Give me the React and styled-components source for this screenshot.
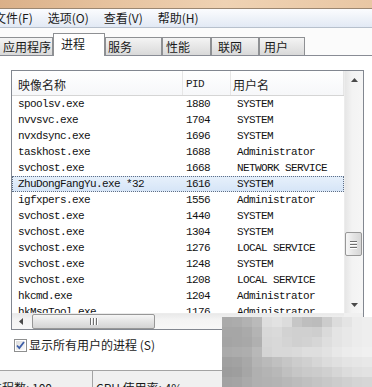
import styled, { createGlobalStyle } from "styled-components";

const CJK = `"Noto Sans CJK SC", "Noto Sans", sans-serif`;
const MONO = `"Liberation Mono", "DejaVu Sans Mono", "Courier New", monospace`;

const GlobalStyle = createGlobalStyle`
  html, body {
    margin: 0;
    padding: 0;
    background: #fff;
    overflow: hidden;
  }
  body {
    width: 372px;
    height: 387px;
  }
`;

const Window = styled.div`
  position: relative;
  width: 392px;
  height: 387px;
  margin-left: -10px;
  display: flex;
  flex-direction: column;
  background: #fbfbfb;
  font-family: ${CJK};
  color: #1a1a1a;
  overflow: hidden;
`;

const TitleStrip = styled.div`
  height: 8px;
  flex-shrink: 0;
  background: linear-gradient(90deg, #d9ae86 0%, #e6c29e 30%, #efd2b3 60%, #e8c6a3 100%);
  border-bottom: 1px solid #9b8772;
`;

const MenuBar = styled.div`
  height: 18px;
  flex-shrink: 0;
  display: flex;
  align-items: center;
  gap: 15px;
  padding-left: 4px;
  font-size: 12px;
  line-height: 18px;
  background: linear-gradient(#fbfcfe, #e2e9f4);
  border-bottom: 1px solid #b7c0cc;
`;

const MenuItem = styled.span`
  white-space: nowrap;
`;

const TabRow = styled.div`
  height: 27px;
  flex-shrink: 0;
  display: flex;
  align-items: flex-end;
  padding-left: 4px;
`;

const Tab = styled.div`
  position: relative;
  box-sizing: border-box;
  width: ${(p) => p.$w}px;
  height: ${(p) => (p.$active ? 23 : 18)}px;
  margin-bottom: ${(p) => (p.$active ? -1 : 0)}px;
  z-index: ${(p) => (p.$active ? 2 : 1)};
  padding-left: ${(p) => p.$pl}px;
  padding-top: ${(p) => (p.$active ? 1 : 0)}px;
  border: 1px solid #8e9093;
  border-bottom: none;
  background: ${(p) => (p.$active ? "#fff" : "linear-gradient(#f4f4f4, #d9d9d9)")};
  font-size: 12px;
  line-height: 17px;
  white-space: nowrap;
`;

const Panel = styled.div`
  box-sizing: border-box;
  height: 315px;
  flex-shrink: 0;
  margin: 0 4px;
  padding: 14px 0 0 16px;
  background: #fff;
  border-top: 1px solid #898c95;
  border-left: 1px solid #898c95;
`;

const ListBox = styled.div`
  box-sizing: border-box;
  width: 353px;
  height: 260px;
  border: 1px solid #828790;
  display: grid;
  grid-template-columns: 1fr 19px;
  grid-template-rows: 1fr 16px;
  background: #fff;
`;

const ListArea = styled.div`
  overflow: hidden;
`;

const Header = styled.div`
  box-sizing: border-box;
  height: 25px;
  display: grid;
  grid-template-columns: 171px 48px 1fr;
  border-bottom: 1px solid #d5d5d5;
  background: linear-gradient(#ffffff, #f6f7f9);
`;

const HeadCell = styled.div`
  display: flex;
  align-items: center;
  padding-top: 2px;
  padding-left: ${(p) => p.$pl}px;
  border-right: 1px solid #e6e6e6;
  font-family: ${(p) => (p.$mono ? MONO : CJK)};
  font-size: ${(p) => (p.$mono ? 11 : 12)}px;
  letter-spacing: ${(p) => (p.$mono ? -0.6 : 0)}px;
  color: #1e1e1e;
`;

const Row = styled.div`
  box-sizing: border-box;
  height: 16px;
  display: grid;
  grid-template-columns: 171px 48px 1fr;
  align-items: center;
  font-family: ${MONO};
  font-size: 11px;
  line-height: 14px;
  letter-spacing: -0.6px;
  color: #111;
  background: ${(p) => (p.$selected ? "linear-gradient(#e6f0fb, #d6e5f7)" : "transparent")};
  border: 1px dotted ${(p) => (p.$selected ? "#5f6f86" : "transparent")};
`;

const Cell = styled.span`
  padding-left: ${(p) => p.$pl}px;
  white-space: nowrap;
  overflow: hidden;
`;

const VScroll = styled.div`
  display: flex;
  flex-direction: column;
  background: linear-gradient(90deg, #e6e6e6, #f3f3f3 40%, #f6f6f6);
  border-left: 1px solid #ececec;
`;

const ArrowButton = styled.div`
  flex-shrink: 0;
  width: ${(p) => (p.$horizontal ? 17 : 18)}px;
  height: ${(p) => (p.$horizontal ? 16 : 17)}px;
  display: flex;
  align-items: center;
  justify-content: center;
`;

const VTrack = styled.div`
  flex: 1;
`;

const VThumb = styled.div`
  box-sizing: border-box;
  width: 17px;
  height: 24px;
  border: 1px solid #979797;
  border-radius: 2px;
  background: linear-gradient(90deg, #f6f6f6, #e4e4e4 50%, #d6d6d6);
  display: flex;
  flex-direction: column;
  align-items: center;
  justify-content: center;
  gap: 2px;
`;

const GripLine = styled.div`
  width: ${(p) => (p.$vertical ? 1 : 7)}px;
  height: ${(p) => (p.$vertical ? 7 : 1)}px;
  background: #6f6f6f;
  box-shadow: ${(p) => (p.$vertical ? "1px 0 0 #fff" : "0 1px 0 #fff")};
`;

const HScroll = styled.div`
  display: flex;
  align-items: center;
  background: linear-gradient(#e9e9e9, #f4f4f4 40%, #f7f7f7);
  border-top: 1px solid #ececec;
`;

const HThumb = styled.div`
  box-sizing: border-box;
  width: 123px;
  height: 15px;
  margin-left: 3px;
  border: 1px solid #979797;
  border-radius: 2px;
  background: linear-gradient(#f6f6f6, #e4e4e4 50%, #d4d4d4);
  display: flex;
  align-items: center;
  justify-content: center;
  gap: 2px;
`;

const Corner = styled.div`
  background: #f0f0f0;
`;

const CheckRow = styled.div`
  display: flex;
  align-items: center;
  gap: 2px;
  height: 14px;
  margin-top: 8px;
  margin-left: 3px;
  font-size: 12px;
  line-height: 14px;
  color: #1a1a1a;
`;

const StatusBar = styled.div`
  flex: 1;
  display: flex;
  background: #f0f0f0;
  border-top: 1px solid #a3a3a3;
  font-size: 12px;
  line-height: 16px;
`;

const StatusPane = styled.div`
  box-sizing: border-box;
  width: ${(p) => p.$w}px;
  padding: 9px 0 0 ${(p) => p.$pl}px;
  border-right: ${(p) => (p.$divider ? "1px solid #a3a3a3" : "none")};
  white-space: nowrap;
`;

const Mosaic = styled.div`
  position: absolute;
  left: 232px;
  top: 317px;
  width: 150px;
  height: 70px;
  overflow: hidden;
  z-index: 5;
  display: grid;
  grid-template-columns: repeat(15, 10px);
  grid-template-rows: repeat(7, 10px);
`;

const MosaicCell = styled.div`
  background: ${(p) => `rgb(${p.$v}, ${p.$v}, ${p.$v})`};
`;

const menus = ["文件(F)", "选项(O)", "查看(V)", "帮助(H)"];

const tabs = [
  { label: "应用程序", w: 59, pl: 8 },
  { label: "进程", w: 52, pl: 7, active: true },
  { label: "服务", w: 57, pl: 2 },
  { label: "性能", w: 49, pl: 3 },
  { label: "联网", w: 48, pl: 6 },
  { label: "用户", w: 46, pl: 4 },
];

const processes = [
  ["spoolsv.exe", "1880", "SYSTEM"],
  ["nvvsvc.exe", "1704", "SYSTEM"],
  ["nvxdsync.exe", "1696", "SYSTEM"],
  ["taskhost.exe", "1688", "Administrator"],
  ["svchost.exe", "1668", "NETWORK SERVICE"],
  ["ZhuDongFangYu.exe *32", "1616", "SYSTEM"],
  ["igfxpers.exe", "1556", "Administrator"],
  ["svchost.exe", "1440", "SYSTEM"],
  ["svchost.exe", "1304", "SYSTEM"],
  ["svchost.exe", "1276", "LOCAL SERVICE"],
  ["svchost.exe", "1248", "SYSTEM"],
  ["svchost.exe", "1208", "LOCAL SERVICE"],
  ["hkcmd.exe", "1204", "Administrator"],
  ["hkMsgTool.exe", "1176", "Administrator"],
  ["igfxtray.exe", "1160", "Administrator"],
];

const mosaicRows = [
  [0xaa, 0xac, 0xb2, 0xba, 0xde, 0xe2, 0xdc, 0xc6, 0xbe, 0xbc, 0xcc, 0xdc, 0xe4, 0xec, 0xee],
  [0xa6, 0xa6, 0xaa, 0xb4, 0xd8, 0xda, 0xd2, 0xd0, 0xd0, 0xce, 0xda, 0xe4, 0xe8, 0xec, 0xee],
  [0xa4, 0xa6, 0xa8, 0xb0, 0xd6, 0xd8, 0xd4, 0xd0, 0xd2, 0xd6, 0xde, 0xe4, 0xe8, 0xec, 0xee],
  [0xaa, 0xac, 0xae, 0xb8, 0xd4, 0xd8, 0xd8, 0xda, 0xde, 0xde, 0xe2, 0xe8, 0xec, 0xee, 0xf0],
  [0xa0, 0xa2, 0xa8, 0xb4, 0xba, 0xc0, 0xc6, 0xcc, 0xd0, 0xd6, 0xdc, 0xe0, 0xe4, 0xe6, 0xe8],
  [0x9c, 0x9e, 0xa6, 0xb0, 0xb4, 0xb8, 0xc0, 0xc6, 0xca, 0xcc, 0xd0, 0xd6, 0xdc, 0xe0, 0xe2],
  [0xa2, 0xa4, 0xaa, 0xb0, 0xb2, 0xb4, 0xb8, 0xbc, 0xc0, 0xc4, 0xc8, 0xcc, 0xd0, 0xd4, 0xd6],
];

function Arrow({ dir }) {
  const pts = {
    up: "0,4 3.5,0 7,4",
    down: "0,0 3.5,4 7,0",
    left: "4,0 0,3.5 4,7",
  }[dir];
  const w = dir === "left" ? 4 : 7;
  const h = dir === "left" ? 7 : 4;
  return (
    <svg width={w} height={h} viewBox={`0 0 ${w} ${h}`}>
      <polygon points={pts} fill="#4a4a4a" />
    </svg>
  );
}

function CheckBox() {
  return (
    <svg width="13" height="13" viewBox="0 0 13 13">
      <defs>
        <linearGradient id="cbg" x1="0" y1="0" x2="1" y2="1">
          <stop offset="0" stopColor="#dcdcdc" />
          <stop offset="1" stopColor="#fbfbfb" />
        </linearGradient>
      </defs>
      <rect x="0.5" y="0.5" width="12" height="12" fill="#fff" stroke="#8e8f8f" />
      <rect x="2" y="2" width="9" height="9" fill="url(#cbg)" />
      <path d="M3 6.5 L5.3 9 L10 3" fill="none" stroke="#3d5ea8" strokeWidth="1.8" />
    </svg>
  );
}

export default function App() {
  return (
    <>
      <GlobalStyle />
      <Window>
        <TitleStrip />
        <MenuBar>
          {menus.map((m) => (
            <MenuItem key={m}>{m}</MenuItem>
          ))}
        </MenuBar>
        <TabRow>
          {tabs.map((t) => (
            <Tab key={t.label} $w={t.w} $pl={t.pl} $active={t.active}>
              {t.label}
            </Tab>
          ))}
        </TabRow>
        <Panel>
          <ListBox>
            <ListArea>
              <Header>
                <HeadCell $pl={6}>映像名称</HeadCell>
                <HeadCell $pl={3} $mono>
                  PID
                </HeadCell>
                <HeadCell $pl={2}>用户名</HeadCell>
              </Header>
              {processes.map(([name, pid, user], i) => (
                <Row key={i} $selected={i === 5}>
                  <Cell $pl={5}>{name}</Cell>
                  <Cell $pl={2}>{pid}</Cell>
                  <Cell $pl={5}>{user}</Cell>
                </Row>
              ))}
            </ListArea>
            <VScroll>
              <ArrowButton>
                <Arrow dir="up" />
              </ArrowButton>
              <VTrack>
                <VThumb style={{ marginTop: 144 }}>
                  <GripLine />
                  <GripLine />
                  <GripLine />
                </VThumb>
              </VTrack>
              <ArrowButton>
                <Arrow dir="down" />
              </ArrowButton>
            </VScroll>
            <HScroll>
              <ArrowButton $horizontal>
                <Arrow dir="left" />
              </ArrowButton>
              <HThumb>
                <GripLine $vertical />
                <GripLine $vertical />
                <GripLine $vertical />
              </HThumb>
            </HScroll>
            <Corner />
          </ListBox>
          <CheckRow>
            <CheckBox />
            <span>显示所有用户的进程 (S)</span>
          </CheckRow>
        </Panel>
        <StatusBar>
          <StatusPane $w={103} $pl={0} $divider>
            进程数: 100
          </StatusPane>
          <StatusPane $w={160} $pl={3}>
            CPU 使用率: 4%
          </StatusPane>
        </StatusBar>
        <Mosaic>
          {mosaicRows.flatMap((row, r) =>
            row.map((v, c) => <MosaicCell key={`${r}-${c}`} $v={v} />)
          )}
        </Mosaic>
      </Window>
    </>
  );
}
